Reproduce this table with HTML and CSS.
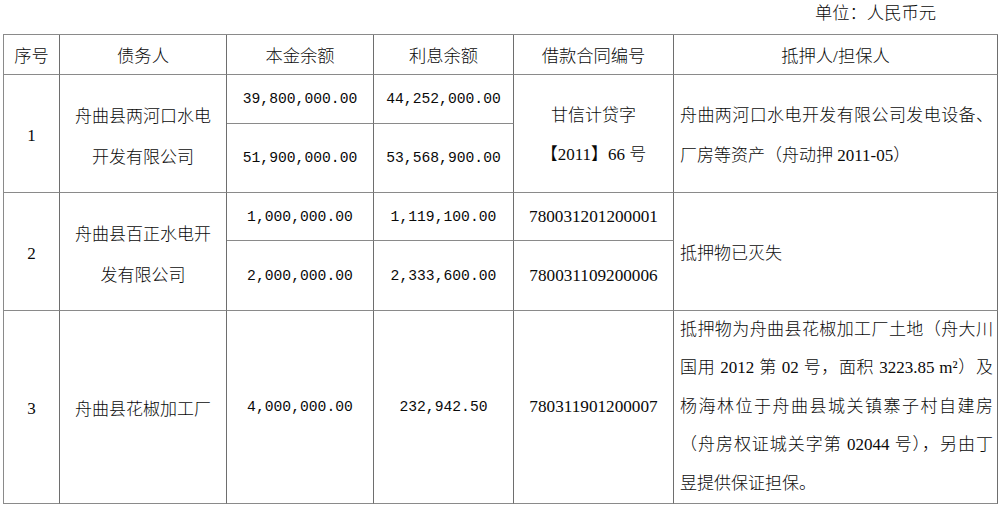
FILE: index.html
```html
<!DOCTYPE html>
<html lang="zh-CN">
<head>
<meta charset="utf-8">
<title>债务明细</title>
<link rel="stylesheet" href="styles.css">
</head>
<body>
<div class="unit">单位：人民币元</div>
<div class="grid">
  <div class="c hd">序号</div>
  <div class="c hd">债务人</div>
  <div class="c hd">本金余额</div>
  <div class="c hd">利息余额</div>
  <div class="c hd">借款合同编号</div>
  <div class="c hd">抵押人/担保人</div>

  <div class="c span2 seq">1</div>
  <div class="c span2 name">舟曲县两河口水电<br>开发有限公司</div>
  <div class="c num">39,800,000.00</div>
  <div class="c num">44,252,000.00</div>
  <div class="c span2 name contract">甘信计贷字<br>【2011】66 号</div>
  <div class="c span2 left two">舟曲两河口水电开发有限公司发电设备、厂房等资产（舟动押 2011-05）</div>
  <div class="c num">51,900,000.00</div>
  <div class="c num">53,568,900.00</div>

  <div class="c span2 seq">2</div>
  <div class="c span2 name">舟曲县百正水电开<br>发有限公司</div>
  <div class="c num">1,000,000.00</div>
  <div class="c num">1,119,100.00</div>
  <div class="c code">780031201200001</div>
  <div class="c span2 left">抵押物已灭失</div>
  <div class="c num">2,000,000.00</div>
  <div class="c num">2,333,600.00</div>
  <div class="c code">780031109200006</div>

  <div class="c seq">3</div>
  <div class="c">舟曲县花椒加工厂</div>
  <div class="c num">4,000,000.00</div>
  <div class="c num">232,942.50</div>
  <div class="c code">780311901200007</div>
  <div class="c left para">
    <span class="ln">抵押物为舟曲县花椒加工厂土地（舟大川</span>
    <span class="ln">国用 2012 第 02 号，面积 3223.85 m²）及</span>
    <span class="ln">杨海林位于舟曲县城关镇寨子村自建房</span>
    <span class="ln">（舟房权证城关字第 02044 号），另由丁</span>
    <span class="ln last">昱提供保证担保。</span>
  </div>
</div>
</body>
</html>
```

FILE: styles.css
```css
html, body {
  margin: 0;
  padding: 0;
  background: #ffffff;
}

body {
  font-family: "Liberation Serif", "Noto Sans CJK SC", serif;
  font-size: 17px;
  font-weight: 300;
  color: #0a0a0a;
}

.unit {
  height: 34px;
  line-height: 28px;
  text-align: right;
  padding-right: 64px;
  font-size: 17.3px;
}

.grid {
  display: grid;
  grid-template-columns: 56px 167px 147px 140px 160px 324px;
  grid-template-rows: 40px 49px 69px 48px 70px 193px;
  margin-left: 3px;
  width: 995px;
  box-sizing: border-box;
  border-top: 1px solid #8a8a8a;
  border-left: 1px solid #8a8a8a;
}

.c {
  border-right: 1px solid #6e6e6e;
  border-bottom: 1px solid #8a8a8a;
  display: flex;
  align-items: center;
  justify-content: center;
  text-align: center;
  min-width: 0;
}

.hd {
  font-size: 17.3px;
}

.span2 {
  grid-row: span 2;
}

.seq {
  padding-top: 4px;
}

.name {
  line-height: 41px;
  padding-top: 6px;
}

.contract {
  line-height: 39px;
  padding-top: 3px;
}

.num {
  font-family: "Liberation Mono", "Noto Sans CJK SC", monospace;
  font-size: 14.7px;
  font-weight: 400;
}

.code {
  font-size: 17.2px;
}

.left {
  justify-content: flex-start;
  text-align: left;
  padding: 0 4px 0 6px;
}

.two {
  line-height: 40px;
  padding-top: 4px;
  text-align: justify;
}

.para {
  flex-direction: column;
  align-items: stretch;
  justify-content: center;
  line-height: 38.5px;
  padding-right: 4px;
}

.ln {
  display: block;
  text-align: justify;
  text-align-last: justify;
  white-space: nowrap;
}

.ln.last {
  text-align-last: left;
}
```
